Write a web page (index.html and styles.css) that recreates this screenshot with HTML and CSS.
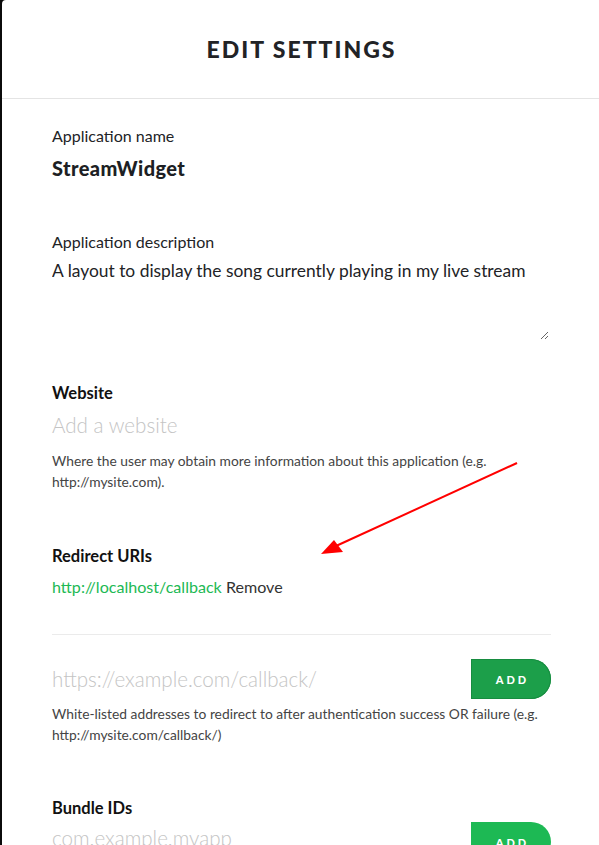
FILE: index.html
```html
<!DOCTYPE html>
<html>
<head>
<meta charset="utf-8">
<link rel="stylesheet" href="styles.css">
</head>
<body>
<div class="modal">
  <header class="header"><h1 class="title">EDIT SETTINGS</h1></header>
  <div class="content">
    <div class="field f-name">
      <div class="label">Application name</div>
      <div class="value">StreamWidget</div>
    </div>
    <div class="field f-desc">
      <div class="label">Application description</div>
      <textarea class="textarea">A layout to display the song currently playing in my live stream</textarea>
    </div>
    <div class="field f-web">
      <div class="label bold">Website</div>
      <div class="placeholder">Add a website</div>
      <p class="help">Where the user may obtain more information about this application (e.g. http://mysite.com).</p>
    </div>
    <div class="field f-redirect">
      <div class="label bold">Redirect URIs</div>
      <div class="uri"><span class="link">http://localhost/callback</span> Remove</div>
      <div class="sep"></div>
      <div class="row">
        <div class="placeholder">https://example.com/callback/</div>
        <button class="btn btn-dark">ADD</button>
      </div>
      <p class="help help-tight">White-listed addresses to redirect to after authentication success OR failure (e.g. http://mysite.com/callback/)</p>
    </div>
    <div class="field f-bundle">
      <div class="label bold">Bundle IDs</div>
      <div class="row row-bundle">
        <div class="placeholder">com.example.myapp</div>
        <button class="btn">ADD</button>
      </div>
    </div>
  </div>
  <svg class="arrow" width="600" height="845" viewBox="0 0 600 845">
    <line x1="517" y1="463" x2="336" y2="546" stroke="#ff0000" stroke-width="2"/>
    <polygon points="321,554 334,540 343,552" fill="#ff0000"/>
  </svg>
</div>
</body>
</html>
```
FILE: styles.css
```css
html, body {
  margin: 0;
  padding: 0;
}
body {
  background: #0b0b0b;
  font-family: "Lato", "Liberation Sans", sans-serif;
  color: #222326;
  overflow: hidden;
}
.modal {
  position: relative;
  margin-left: 2px;
  background: #fff;
  min-height: 845px;
  border-top-left-radius: 4px;
}
.header {
  height: 98px;
  border-bottom: 1px solid #e4e4e4;
  display: flex;
  align-items: center;
  justify-content: center;
}
.title {
  margin: 0;
  font-family: "Lato", sans-serif;
  font-weight: 900;
  font-size: 23px;
  letter-spacing: 2px;
  color: #222326;
  transform: translateX(1px);
}
.content {
  padding: 0 48px 0 50px;
}
.field { display: flex; flex-direction: column; }
.f-name { padding-top: 27px; }
.label {
  font-size: 16px;
  line-height: 20px;
  font-weight: 400;
  color: #222326;
}
.label.bold { font-size: 16.5px; font-weight: 700; color: #111; }
.value {
  margin-top: 10px;
  font-size: 20px;
  line-height: 24px;
  font-weight: 900;
  letter-spacing: 0.4px;
  color: #1d1f24;
}
.f-desc { margin-top: 52px; }
.textarea {
  margin-top: 6px;
  border: none;
  outline: none;
  padding: 0;
  width: 497px;
  height: 82px;
  font-family: "Lato", sans-serif;
  font-size: 17.4px;
  line-height: 26px;
  color: #222326;
  resize: vertical;
  background: transparent;
}
.f-web { margin-top: 43px; }
.placeholder {
  font-size: 20.6px;
  line-height: 28px;
  font-weight: 300;
  color: #c4c4c4;
}
.f-web .placeholder { margin-top: 8px; }
.help {
  margin: 11px 0 0;
  font-size: 13.8px;
  line-height: 21px;
  color: #444;
}
.f-redirect { margin-top: 54px; }
.uri {
  margin-top: 10px;
  font-size: 16.1px;
  line-height: 22px;
  color: #333;
}
.link { color: #1db954; }
.sep {
  margin-top: 36px;
  height: 1px;
  background: #ebebeb;
}
.row {
  margin-top: 24px;
  display: flex;
  align-items: center;
  justify-content: space-between;
  height: 40px;
}
.btn {
  width: 80px;
  height: 40px;
  border: none;
  border-radius: 0 20px 20px 0;
  background: #1db954;
  color: #fff;
  font-family: "Lato", sans-serif;
  font-weight: 900;
  font-size: 11px;
  letter-spacing: 3px;
  padding: 0 0 0 3px;
}
.btn-dark {
  background: #1c9f4a;
  box-shadow: inset 0 0 0 1px #178c40;
}
.help-tight { margin-top: 4px; }
.f-bundle { margin-top: 53px; }
.row-bundle { margin-top: 4px; align-items: flex-start; }
.row-bundle .placeholder { margin-top: 2px; }
.arrow {
  position: absolute;
  left: -2px;
  top: 0;
  pointer-events: none;
}
```
